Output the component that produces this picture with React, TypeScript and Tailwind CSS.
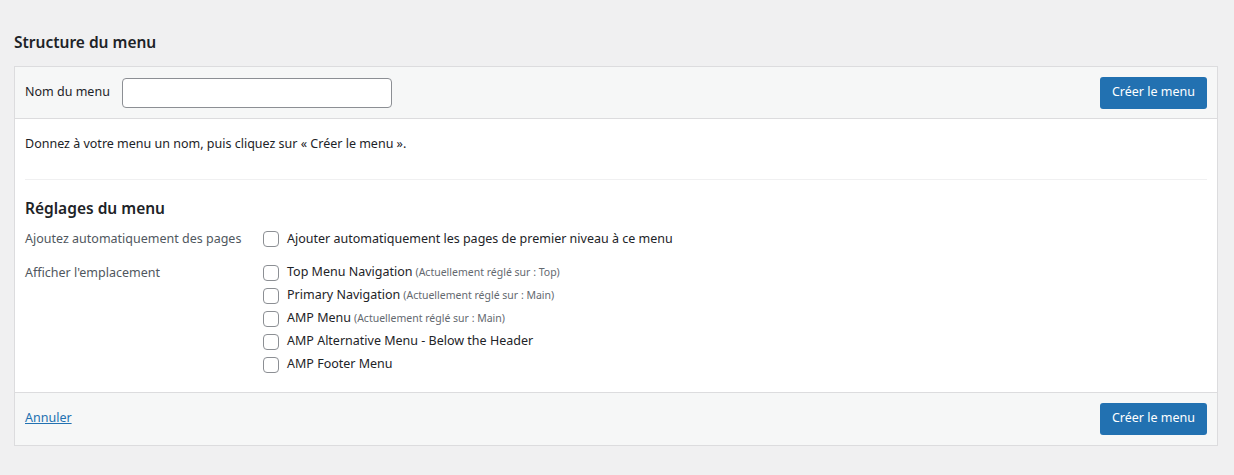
export default function App() {
  const locations = [
    { name: 'Top Menu Navigation', note: '(Actuellement réglé sur : Top)' },
    { name: 'Primary Navigation', note: '(Actuellement réglé sur : Main)' },
    { name: 'AMP Menu', note: '(Actuellement réglé sur : Main)' },
    { name: 'AMP Alternative Menu - Below the Header', note: '' },
    { name: 'AMP Footer Menu', note: '' },
  ]

  const Box = () => (
    <span className="inline-block w-4 h-4 shrink-0 rounded-[4px] border border-[#8c8f94] bg-white" />
  )

  return (
    <div
      className="min-h-screen bg-[#f0f0f1] pl-[14px] pr-[16px] pt-[30px] text-[12.5px] text-[#1d2327]"
      style={{ fontFamily: '"Noto Sans", "Open Sans", Arial, sans-serif' }}
    >
      {/* Titre */}
      <h2 className="text-[15.5px] font-semibold leading-6 mb-[12px]">Structure du menu</h2>

      <div className="border border-[#dcdcde] bg-white">
        {/* En-tête */}
        <div className="h-[52px] bg-[#f6f7f7] border-b border-[#dcdcde] flex items-center justify-between px-[10px]">
          <div className="flex items-center">
            <span>Nom du menu</span>
            <input
              type="text"
              className="ml-[12px] w-[270px] h-[30px] rounded-[4px] border border-[#8c8f94] bg-white px-2 outline-none"
            />
          </div>
          <button className="h-[32px] px-[12px] rounded-[3px] bg-[#2271b1] text-white">
            Créer le menu
          </button>
        </div>

        {/* Contenu */}
        <div className="px-[10px]">
          <p className="pt-[15px] pb-[25px] leading-5">
            Donnez à votre menu un nom, puis cliquez sur « Créer le menu ».
          </p>
          <div className="border-t border-[#f0f0f1]" />

          <h3 className="mt-[16px] text-[15.5px] font-semibold leading-6">Réglages du menu</h3>

          <div className="mt-[10px] flex items-center">
            <div className="w-[238px] text-[#50575e]">Ajoutez automatiquement des pages</div>
            <label className="flex items-center gap-[8px]">
              <Box />
              <span>Ajouter automatiquement les pages de premier niveau à ce menu</span>
            </label>
          </div>

          <div className="mt-[14px] pb-[17px] flex">
            <div className="w-[238px] text-[#50575e] leading-5">Afficher l'emplacement</div>
            <div className="flex flex-col gap-[3px]">
              {locations.map((loc) => (
                <label key={loc.name} className="flex items-center gap-[8px] h-[20px]">
                  <Box />
                  <span>
                    {loc.name}
                    {loc.note && <span className="text-[10.5px] text-[#646970] ml-[3px]">{loc.note}</span>}
                  </span>
                </label>
              ))}
            </div>
          </div>
        </div>

        {/* Pied */}
        <div className="h-[53px] bg-[#f6f7f7] border-t border-[#dcdcde] flex items-center justify-between px-[10px]">
          <a href="#" className="text-[#2271b1] underline">Annuler</a>
          <button className="h-[32px] px-[12px] rounded-[3px] bg-[#2271b1] text-white">
            Créer le menu
          </button>
        </div>
      </div>
    </div>
  )
}
